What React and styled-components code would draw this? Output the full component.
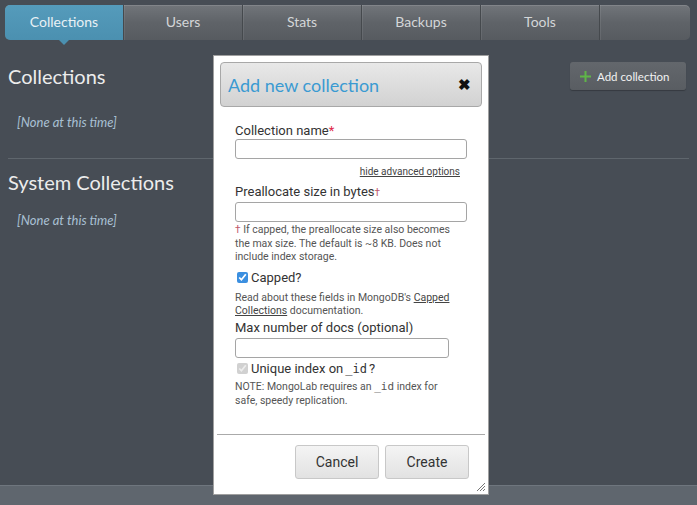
import React from 'react';
import styled, { createGlobalStyle } from 'styled-components';

const GlobalStyle = createGlobalStyle`
  html, body {
    margin: 0;
    padding: 0;
    background: #474d55;
  }
  body {
    font-family: Lato, "Open Sans", sans-serif;
  }
`;

const Page = styled.div`
  position: relative;
  height: 505px;
  display: flex;
  flex-direction: column;
  overflow: hidden;
`;

const Nav = styled.ul`
  display: flex;
  margin: 5px 7px 0 5px;
  padding: 0;
  list-style: none;
  height: 35px;
  border-radius: 5px;
  background: linear-gradient(#71757a, #5f6368 50%, #575b60);
  box-shadow: inset 0 1px 0 rgba(255, 255, 255, 0.12);
`;

const Tab = styled.li`
  position: relative;
  box-sizing: border-box;
  flex: ${p => (p.$fill ? '1' : '0 0 119px')};
  display: flex;
  align-items: center;
  justify-content: center;
  padding-bottom: 3px;
  font-size: 14px;
  color: ${p => (p.$active ? '#e9f1f5' : '#d4d6d8')};
  background: ${p => (p.$active ? 'linear-gradient(#559bbb, #4b90b0)' : 'transparent')};
  border-radius: ${p => (p.$active ? '5px 0 0 5px' : '0')};
  border-right: ${p => (p.$fill ? 'none' : '1px solid #45494d')};
  box-shadow: ${p => (p.$fill ? 'none' : '1px 0 0 rgba(255, 255, 255, 0.08)')};

  &::after {
    content: '';
    display: ${p => (p.$active ? 'block' : 'none')};
    position: absolute;
    bottom: -5px;
    left: 54px;
    border-left: 5px solid transparent;
    border-right: 5px solid transparent;
    border-top: 5px solid #4b90b0;
  }
`;

const Main = styled.main`
  flex: 1;
  padding: 0 8px;
`;

const SectionHead = styled.div`
  display: flex;
  align-items: center;
  justify-content: space-between;
  margin-top: ${p => p.$top};
  height: 28px;
`;

const Heading = styled.h2`
  margin: 0;
  font-size: 20px;
  font-weight: 400;
  color: #ececec;
`;

const AddButton = styled.button`
  display: flex;
  align-items: center;
  gap: 6px;
  height: 28px;
  width: 116px;
  margin-right: 3px;
  padding: 0 10px;
  border: none;
  border-radius: 3px;
  background: linear-gradient(#63676c, #595d62);
  box-shadow: 0 1px 1px rgba(0, 0, 0, 0.25);
  color: #f2f2f2;
  font-family: Lato, sans-serif;
  font-size: 11.5px;
`;

const Empty = styled.p`
  margin: ${p => p.$margin};
  padding-left: 9px;
  font-size: 13px;
  line-height: 15px;
  font-style: italic;
  color: #a9c0d3;
`;

const Divider = styled.hr`
  margin: 0;
  border: none;
  border-top: 1px solid #5f666d;
`;

const Footer = styled.footer`
  height: 19px;
  background: #5f666e;
  border-top: 1px solid #6f767e;
`;

const Modal = styled.div`
  position: absolute;
  left: 213px;
  top: 55px;
  width: 276px;
  height: 440px;
  padding: 6px;
  box-sizing: border-box;
  background: #fff;
  border: 1px solid #a0a0a0;
  font-family: Roboto, "Noto Sans", sans-serif;
  color: #333;
`;

const ModalHeader = styled.div`
  display: flex;
  align-items: center;
  justify-content: space-between;
  height: 43px;
  padding: 0 10px 0 7px;
  border: 1px solid #a8a8a8;
  border-radius: 4px;
  background: linear-gradient(#e8e8e8, #d2d2d2);
`;

const Title = styled.span`
  font-family: Lato, sans-serif;
  font-size: 18px;
  color: #3a9ad2;
`;

const Close = styled.span`
  font-size: 15px;
  font-weight: 700;
  color: #111;
`;

const Body = styled.div`
  padding: 16px 15px 0 15px;
`;

const Label = styled.div`
  font-size: 13px;
  line-height: 16px;
  margin-top: ${p => p.$top || '0'};
`;

const Star = styled.span`
  color: #e0284a;
`;

const Dagger = styled.span`
  color: #c0566a;
  font-size: 10px;
`;

const Input = styled.input`
  display: block;
  box-sizing: border-box;
  width: ${p => p.$width};
  height: 20px;
  margin: ${p => p.$top || '0'} 0 0;
  border: 1px solid #a5a5a5;
  border-radius: 3px;
`;

const Toggle = styled.a`
  display: block;
  text-align: right;
  margin: 7px 7px 0 0;
  font-size: 10px;
  line-height: 12px;
  color: #444;
  text-decoration: underline;
`;

const Help = styled.p`
  margin: ${p => p.$margin};
  max-width: 222px;
  font-size: 10.5px;
  line-height: ${p => p.$lh || '13.5px'};
  color: #555;

  a {
    color: #444;
    text-decoration: underline;
  }
`;

const Mono = styled.code`
  font-family: "DejaVu Sans Mono", monospace;
  font-size: ${p => p.$size};
`;

const CheckRow = styled.label`
  display: flex;
  align-items: center;
  gap: 2px;
  margin-top: ${p => p.$top};
  font-size: 13px;
  line-height: 16px;
  color: #333;

  input {
    margin: 0 1px 0 2px;
    width: 11px;
    height: 11px;
    accent-color: #3b8fe0;
  }
`;

const Rule = styled.hr`
  margin: 26px -3px 0 -3px;
  border: none;
  border-top: 1px solid #aaa;
`;

const Actions = styled.div`
  display: flex;
  justify-content: flex-end;
  gap: 6px;
  margin: 10px 13px 0 0;
`;

const Button = styled.button`
  width: 84px;
  height: 34px;
  border: 1px solid #c8c8c8;
  border-radius: 3px;
  background: linear-gradient(#f4f4f4, #e2e2e2);
  font-family: Roboto, sans-serif;
  font-size: 14px;
  color: #333;
`;

const Grip = styled.svg`
  position: absolute;
  right: 2px;
  bottom: 2px;
`;

const tabs = ['Collections', 'Users', 'Stats', 'Backups', 'Tools', ''];

const App = () => (
  <Page>
    <GlobalStyle />
    <Nav>
      {tabs.map((t, i) => (
        <Tab key={i} $active={i === 0} $fill={i === tabs.length - 1}>{t}</Tab>
      ))}
    </Nav>
    <Main>
      <SectionHead $top="22px">
        <Heading>Collections</Heading>
        <AddButton>
          <svg width="11" height="11" viewBox="0 0 11 11">
            <path d="M5.5 0v11M0 5.5h11" stroke="#5fb548" strokeWidth="2" />
          </svg>
          Add collection
        </AddButton>
      </SectionHead>
      <Empty $margin="25px 0 28px">[None at this time]</Empty>
      <Divider />
      <SectionHead $top="9px">
        <Heading>System Collections</Heading>
      </SectionHead>
      <Empty $margin="17px 0 0">[None at this time]</Empty>
    </Main>
    <Footer />

    <Modal>
      <ModalHeader>
        <Title>Add new collection</Title>
        <Close>✖</Close>
      </ModalHeader>
      <Body>
        <Label>Collection name<Star>*</Star></Label>
        <Input $width="232px" />
        <Toggle>hide advanced options</Toggle>
        <Label $top="6px">Preallocate size in bytes<Dagger>†</Dagger></Label>
        <Input $width="232px" $top="1px" />
        <Help $margin="1px 0 0">
          <Dagger>†</Dagger> If capped, the preallocate size also becomes the max size. The default is ~8 KB. Does not include index storage.
        </Help>
        <CheckRow $top="6px">
          <input type="checkbox" defaultChecked />
          Capped?
        </CheckRow>
        <Help $margin="5px 0 0" $lh="13px">
          Read about these fields in MongoDB's <a>Capped Collections</a> documentation.
        </Help>
        <Label $top="3px">Max number of docs (optional)</Label>
        <Input $width="214px" $top="2px" />
        <CheckRow $top="3px">
          <input type="checkbox" defaultChecked disabled />
          Unique index on <Mono $size="12px">_id</Mono>?
        </CheckRow>
        <Help $margin="3px 0 0" $lh="14px">
          NOTE: MongoLab requires an <Mono $size="11px">_id</Mono> index for safe, speedy replication.
        </Help>
      </Body>
      <Rule />
      <Actions>
        <Button>Cancel</Button>
        <Button>Create</Button>
      </Actions>
      <Grip width="11" height="11" viewBox="0 0 11 11">
        <path d="M10 2L2 10M10 5L5 10M10 8L8 10" stroke="#777" strokeWidth="1" />
      </Grip>
    </Modal>
  </Page>
);

export default App;
